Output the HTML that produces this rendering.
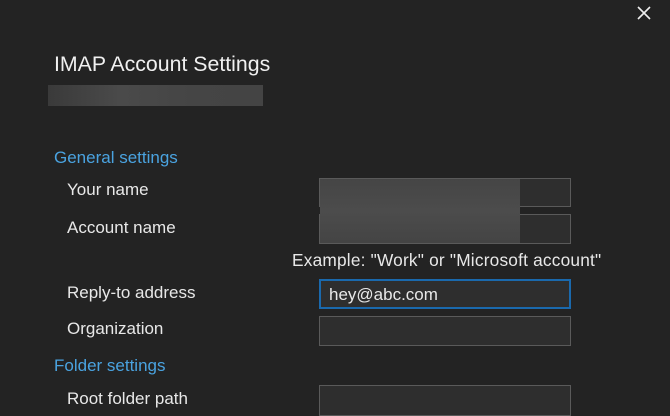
<!DOCTYPE html>
<html><head><style>
body{margin:0;width:670px;height:416px;background:#232323;overflow:hidden;position:relative;font-family:"Segoe UI","Liberation Sans",sans-serif;color:#e8e8e8}
.t{position:absolute;white-space:nowrap}
.in{position:absolute;left:319px;width:252px;background:#2e2e2e;border:1px solid #5a5a5a;box-sizing:border-box}
</style></head><body>
<svg style="position:absolute;left:636px;top:5px" width="16" height="16"><path d="M2 2L14 14M14 2L2 14" stroke="#eee" stroke-width="1.6"/></svg>
<div class="t" style="left:54px;top:52px;font-size:21.3px;color:#f0f0f0">IMAP Account Settings</div>
<div style="position:absolute;left:48px;top:85px;width:215px;height:21px;background:linear-gradient(90deg,#3a3a3a,#4a4a4a,#454545,#444)"></div>
<div class="t" style="left:54px;top:148px;font-size:17px;color:#4aa3e0">General settings</div>
<div class="t" style="left:67px;top:180px;font-size:17px">Your name</div>
<div class="t" style="left:67px;top:218px;font-size:17px">Account name</div>
<div class="in" style="top:178px;height:29px"></div>
<div class="in" style="top:214px;height:30px"></div>
<div style="position:absolute;left:320px;top:179px;width:200px;height:64px;background:linear-gradient(180deg,#454545,#4c4c4c,#444)"></div>
<div class="t" style="left:292px;top:250px;font-size:17.3px;letter-spacing:0.2px">Example: "Work" or "Microsoft account"</div>
<div class="t" style="left:67px;top:283px;font-size:17px">Reply-to address</div>
<div class="in" style="top:279px;height:30px;border:2px solid #1a69ad;padding-left:8px;font-size:17px;line-height:27px">hey@abc.com</div>
<div class="t" style="left:67px;top:319px;font-size:17px">Organization</div>
<div class="in" style="top:316px;height:30px"></div>
<div class="t" style="left:54px;top:356px;font-size:17px;color:#4aa3e0">Folder settings</div>
<div class="t" style="left:67px;top:389px;font-size:17px">Root folder path</div>
<div class="in" style="top:385px;height:31px"></div>
</body></html>
